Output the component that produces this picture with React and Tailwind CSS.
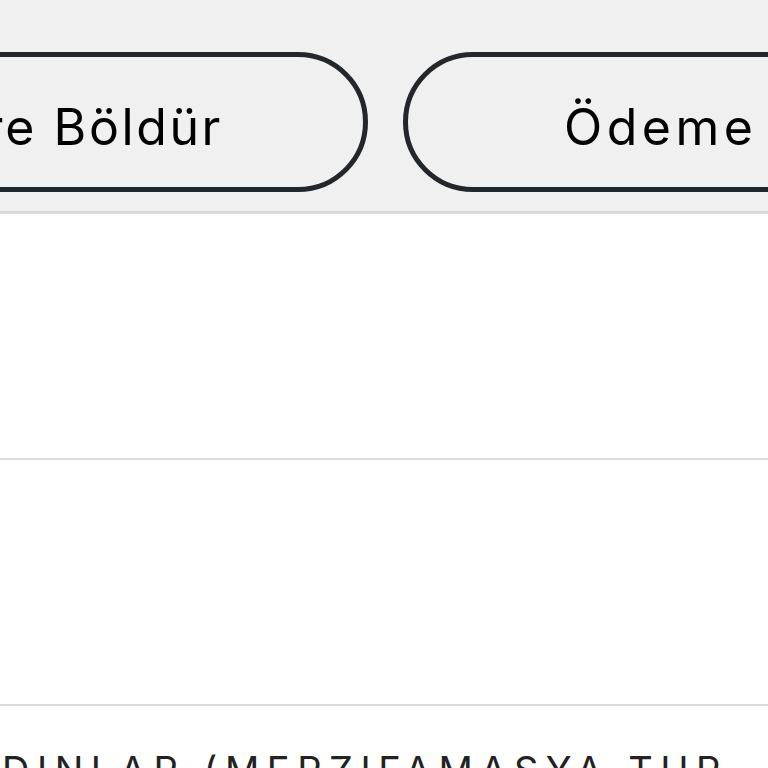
export default function App() {
  return (
    <div className="h-[768px] w-[768px] overflow-hidden bg-white font-['Inter',sans-serif] text-black">
      <div className="flex h-[214px] gap-[35px] border-b-[3px] border-[#d9d9d9] bg-[#f0f0f0] pt-[52px]">
        <button className="ml-[-232px] flex h-[140px] w-[600px] shrink-0 items-center justify-end whitespace-nowrap rounded-full border-[5px] border-[#23262b] pr-[140px] pt-[10px] text-[50px] leading-none tracking-[2.6px]">
          Kişiye Göre Böldür
        </button>
        <button className="flex h-[140px] w-[512px] shrink-0 items-center justify-start whitespace-nowrap rounded-full border-[5px] border-[#23262b] pl-[156px] pt-[10px] text-[50px] leading-none tracking-[4.5px]">
          Ödeme
        </button>
      </div>
      <div className="h-[246px] border-b-2 border-[#dcdcdc]" />
      <div className="h-[246px] border-b-2 border-[#dcdcdc]" />
      <div className="flex justify-end whitespace-nowrap pr-[40px] pt-[45px] text-[38px] leading-none tracking-[7.5px] text-[#222]">
        KADINLAR (MERZIFAMASYA TUR
      </div>
    </div>
  )
}
